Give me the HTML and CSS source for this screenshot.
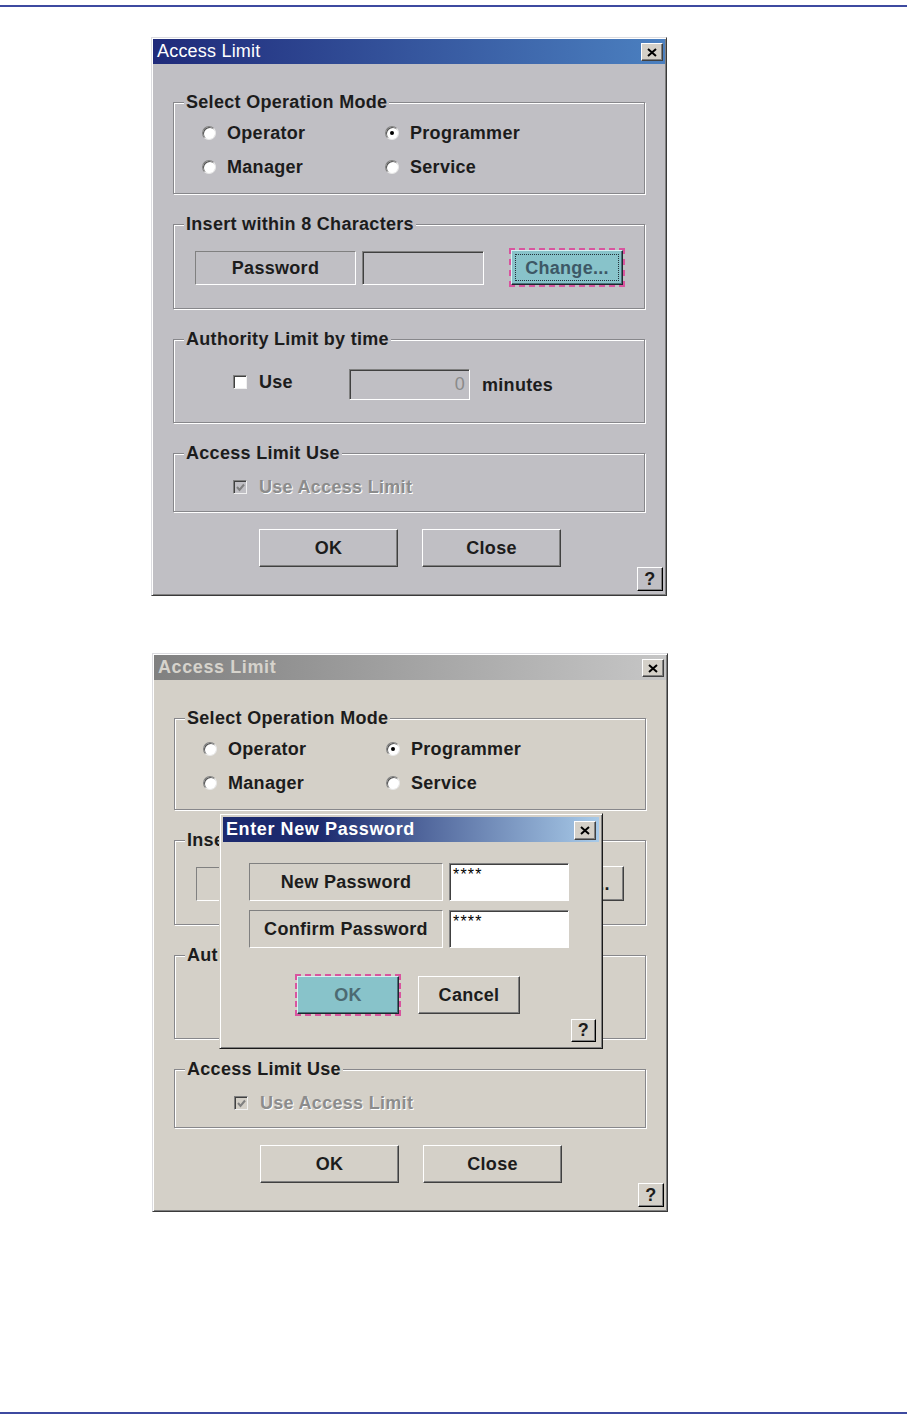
FILE: index.html
```html
<!DOCTYPE html>
<html lang="en">
<head>
  <meta charset="UTF-8">
  <title>Access Limit</title>
  <link rel="stylesheet" href="styles.css">
</head>
<body>
  <div class="page">
    <div class="rule rule-top"></div>

    <!-- first shot: main dialog, Change... focused -->
    <div class="dialog dialog-first">
      <div class="titlebar">
        <span class="title">Access Limit</span>
        <span class="close-btn">
          <svg width="10" height="9" viewBox="0 0 10 9"><path d="M1 1 L9 8 M9 1 L1 8" stroke="#000" stroke-width="2"/></svg>
        </span>
      </div>
      <div class="dlg-body">
        <div class="group group-mode">
          <div class="group-title">Select Operation Mode</div>
          <div class="radio-grid">
            <label class="radio"><span class="radio-dot"></span>Operator</label>
            <label class="radio"><span class="radio-dot checked"></span>Programmer</label>
            <label class="radio"><span class="radio-dot"></span>Manager</label>
            <label class="radio"><span class="radio-dot"></span>Service</label>
          </div>
        </div>

        <div class="group group-pass">
          <div class="group-title">Insert within 8 Characters</div>
          <div class="pass-row">
            <div class="static-box pass-label">Password</div>
            <div class="field field-pass"></div>
            <button class="btn btn-change btn-focus"><span class="focus-rect">Change...</span></button>
          </div>
        </div>

        <div class="group group-time">
          <div class="group-title">Authority Limit by time</div>
          <div class="time-row">
            <label class="check"><span class="check-box"></span>Use</label>
            <div class="field field-min">0</div>
            <span class="unit">minutes</span>
          </div>
        </div>

        <div class="group group-use">
          <div class="group-title">Access Limit Use</div>
          <div class="use-row">
            <label class="check disabled">
              <span class="check-box checked">
                <svg width="9" height="9" viewBox="0 0 9 9"><path d="M1 4 L3.5 7 L8 1.5" fill="none" stroke="#808080" stroke-width="2"/></svg>
              </span>Use Access Limit
            </label>
          </div>
        </div>

        <div class="actions">
          <button class="btn btn-main">OK</button>
          <button class="btn btn-main">Close</button>
        </div>
        <div class="help-row"><span class="help-btn">?</span></div>
      </div>
    </div>

    <!-- second shot: main dialog inactive, Enter New Password on top -->
    <div class="dialog dialog-second">
      <div class="titlebar titlebar-inactive">
        <span class="title">Access Limit</span>
        <span class="close-btn">
          <svg width="10" height="9" viewBox="0 0 10 9"><path d="M1 1 L9 8 M9 1 L1 8" stroke="#000" stroke-width="2"/></svg>
        </span>
      </div>
      <div class="dlg-body">
        <div class="group group-mode">
          <div class="group-title">Select Operation Mode</div>
          <div class="radio-grid">
            <label class="radio"><span class="radio-dot"></span>Operator</label>
            <label class="radio"><span class="radio-dot checked"></span>Programmer</label>
            <label class="radio"><span class="radio-dot"></span>Manager</label>
            <label class="radio"><span class="radio-dot"></span>Service</label>
          </div>
        </div>

        <div class="group group-pass">
          <div class="group-title">Insert within 8 Characters</div>
          <div class="pass-row">
            <div class="static-box pass-label">Password</div>
            <div class="field field-pass"></div>
            <button class="btn btn-change"><span class="plain-rect">Change...</span></button>
          </div>
        </div>

        <div class="group group-time">
          <div class="group-title">Authority Limit by time</div>
          <div class="time-row">
            <label class="check"><span class="check-box"></span>Use</label>
            <div class="field field-min">0</div>
            <span class="unit">minutes</span>
          </div>
        </div>

        <div class="group group-use">
          <div class="group-title">Access Limit Use</div>
          <div class="use-row">
            <label class="check disabled">
              <span class="check-box checked">
                <svg width="9" height="9" viewBox="0 0 9 9"><path d="M1 4 L3.5 7 L8 1.5" fill="none" stroke="#808080" stroke-width="2"/></svg>
              </span>Use Access Limit
            </label>
          </div>
        </div>

        <div class="actions">
          <button class="btn btn-main">OK</button>
          <button class="btn btn-main">Close</button>
        </div>
        <div class="help-row"><span class="help-btn">?</span></div>
      </div>

      <div class="popup">
        <div class="titlebar titlebar-popup">
          <span class="title">Enter New Password</span>
          <span class="close-btn">
            <svg width="10" height="9" viewBox="0 0 10 9"><path d="M1 1 L9 8 M9 1 L1 8" stroke="#000" stroke-width="2"/></svg>
          </span>
        </div>
        <div class="popup-body">
          <div class="pw-row">
            <div class="static-box pw-label">New Password</div>
            <div class="field field-white">****</div>
          </div>
          <div class="pw-row">
            <div class="static-box pw-label">Confirm Password</div>
            <div class="field field-white">****</div>
          </div>
          <div class="popup-actions">
            <button class="btn btn-pop btn-focus">OK</button>
            <button class="btn btn-pop">Cancel</button>
          </div>
          <div class="help-row popup-help"><span class="help-btn">?</span></div>
        </div>
      </div>
    </div>

    <div class="rule rule-bottom"></div>
  </div>
</body>
</html>
```

FILE: styles.css
```css
* {
  box-sizing: border-box;
}
body {
  margin: 0;
  background: #fff;
  font-family: "Liberation Sans", Arial, sans-serif;
}
.page {
  height: 1424px;
  display: flex;
  flex-direction: column;
}
.rule {
  flex: none;
  height: 2px;
  background: #3d4aa0;
}
.rule-top {
  margin-top: 5px;
}
.rule-bottom {
  margin-top: auto;
  margin-bottom: 10px;
}

/* window frame */
.dialog {
  --face: #c0bfc4;
  position: relative;
  flex: none;
  width: 516px;
  margin-left: 151px;
  padding: 1px;
  border: 1px solid;
  border-color: #dcdce0 #3a3a3a #3a3a3a #dcdce0;
  box-shadow: inset 1px 1px 0 #fff, inset -1px -1px 0 #808080;
  background: var(--face);
  color: #1c1c1c;
  font-size: 18px;
  font-weight: bold;
  letter-spacing: 0.3px;
  line-height: 20px;
}
.dialog-first {
  margin-top: 30px;
}
.dialog-second {
  --face: #d4d0c8;
  margin-top: 57px;
  margin-left: 152px;
}

.titlebar {
  display: flex;
  align-items: flex-start;
  height: 25px;
  background: linear-gradient(90deg, #1f2a7a, #4b80c0);
}
.titlebar-inactive {
  background: linear-gradient(90deg, #808080, #c6c6c6);
}
.titlebar-popup {
  background: linear-gradient(90deg, #1c2a6e 25%, #a8cae8);
}
.title {
  padding-left: 4px;
  line-height: 25px;
  color: #fff;
  font-weight: normal;
  letter-spacing: 0.2px;
}
.titlebar-inactive .title {
  color: #d6d3cc;
  font-weight: bold;
  letter-spacing: 0.6px;
}
.titlebar-popup .title {
  padding-left: 3px;
  font-weight: bold;
  letter-spacing: 0.6px;
}
.close-btn {
  display: flex;
  align-items: center;
  justify-content: center;
  width: 22px;
  height: 18px;
  margin: 4px 2px 0 auto;
  background: #d4d0c8;
  border: 1px solid;
  border-color: #fff #404040 #404040 #fff;
  box-shadow: inset -1px -1px 0 #808080;
}
.titlebar-popup .close-btn {
  margin-right: 3px;
  height: 19px;
}

.dlg-body {
  padding: 38px 2px 3px 20px;
}

/* etched group boxes */
.group {
  margin-right: 18px;
  border: 1px solid #87878b;
  box-shadow: inset 1px 1px 0 #fff, 1px 1px 0 #fff;
}
.group + .group {
  margin-top: 30px;
}
.group-title {
  width: fit-content;
  margin: -11px 0 0 10px;
  padding: 0 2px;
  background: var(--face);
}
.group-mode {
  padding-bottom: 16px;
}
.group-pass {
  padding-bottom: 23px;
}
.group-time {
  padding-bottom: 22px;
}
.group-use {
  padding-bottom: 14px;
}

.radio-grid {
  display: grid;
  grid-template-columns: 183px auto;
  row-gap: 14px;
  margin: 11px 0 0 28px;
}
.radio, .check {
  display: flex;
  align-items: center;
  height: 20px;
}
.radio-dot {
  position: relative;
  flex: none;
  width: 14px;
  height: 14px;
  margin-right: 11px;
  border-radius: 50%;
  background: #fff;
  border: 1px solid;
  border-color: #808080 #e8e8e8 #e8e8e8 #808080;
  box-shadow: inset 1px 1px 0 #505050;
}
.radio-dot.checked::after {
  content: "";
  position: absolute;
  left: 4px;
  top: 4px;
  width: 4px;
  height: 4px;
  border-radius: 50%;
  background: #000;
}

.pass-row {
  display: flex;
  align-items: center;
  height: 35px;
  margin: 16px 0 0 21px;
}
.static-box {
  display: flex;
  align-items: center;
  justify-content: center;
  border: 1px solid;
  border-color: #808080 #fff #fff #808080;
}
.pass-label {
  width: 161px;
  height: 34px;
}
.field {
  border: 1px solid;
  border-color: #808080 #fff #fff #808080;
  box-shadow: inset 1px 1px 0 #404040;
  background: var(--face);
}
.field-pass {
  width: 122px;
  height: 34px;
  margin-left: 6px;
}

.btn {
  font: inherit;
  letter-spacing: inherit;
  color: inherit;
  padding: 0;
  background: var(--face);
  border: 1px solid;
  border-color: #fff #404040 #404040 #fff;
  box-shadow: inset -1px -1px 0 #808080;
}
.btn-focus {
  background: #88c3ca;
  border-color: #d6f0f2 #1c2a30 #1c2a30 #d6f0f2;
  box-shadow: inset -1px -1px 0 #4b7078;
  outline: 2px dashed #d9549f;
  outline-offset: 0;
  color: #3d5866;
}
.btn-change {
  display: flex;
  width: 112px;
  height: 35px;
  margin-left: 27px;
  padding: 3px;
}
.focus-rect, .plain-rect {
  display: flex;
  flex: 1;
  align-items: center;
  justify-content: center;
  border: 1px dotted #24323a;
}
.plain-rect {
  border-color: transparent;
}

.time-row {
  display: flex;
  align-items: center;
  height: 31px;
  margin: 20px 0 0 59px;
}
.time-row .check {
  width: 116px;
  margin-bottom: 6px;
}
.check-box {
  display: flex;
  align-items: center;
  justify-content: center;
  flex: none;
  width: 14px;
  height: 14px;
  margin-right: 12px;
  background: #fff;
  border: 1px solid;
  border-color: #808080 #f0f0f0 #f0f0f0 #808080;
  box-shadow: inset 1px 1px 0 #404040;
}
.check-box.checked {
  background: var(--face);
}
.field-min {
  width: 121px;
  height: 31px;
  padding-right: 4px;
  text-align: right;
  line-height: 29px;
  color: #8a8a8a;
  font-weight: normal;
}
.unit {
  margin-left: 12px;
}
.use-row {
  display: flex;
  margin: 14px 0 0 59px;
}
.check.disabled {
  color: #8c8c8c;
  text-shadow: 1px 1px 0 #fff;
}

.actions {
  display: flex;
  gap: 24px;
  margin-top: 17px;
  padding-left: 86px;
}
.btn-main {
  width: 139px;
  height: 38px;
}
.help-row {
  display: flex;
  justify-content: flex-end;
}
.help-btn {
  width: 26px;
  height: 24px;
  text-align: center;
  line-height: 22px;
  border: 1px solid;
  border-color: #fff #000 #000 #fff;
  box-shadow: inset -1px -1px 0 #808080;
}

/* Enter New Password window */
.popup {
  position: absolute;
  left: 66px;
  top: 159px;
  width: 384px;
  padding: 3px;
  border: 1px solid;
  border-color: #d4d0c8 #1a1a1a #1a1a1a #d4d0c8;
  box-shadow: inset 1px 1px 0 #fff, inset -1px -1px 0 #808080;
  background: #d4d0c8;
  --face: #d4d0c8;
}
.popup-body {
  padding: 21px 3px 3px 26px;
}
.pw-row {
  display: flex;
  gap: 6px;
  height: 38px;
}
.pw-row + .pw-row {
  margin-top: 9px;
}
.pw-label {
  width: 194px;
  height: 38px;
}
.field-white {
  width: 120px;
  height: 38px;
  padding: 4px 3px;
  background: #fff;
  color: #000;
  font-size: 16px;
  line-height: 14px;
  font-weight: normal;
  letter-spacing: 1.2px;
}
.popup-actions {
  display: flex;
  gap: 19px;
  margin-top: 28px;
  padding-left: 48px;
}
.btn-pop {
  width: 102px;
  height: 38px;
}
.popup-actions .btn-focus {
  color: #4c6a72;
}
.popup-help {
  margin-top: 5px;
}
.popup-help .help-btn {
  width: 25px;
  height: 23px;
  line-height: 21px;
}
```
